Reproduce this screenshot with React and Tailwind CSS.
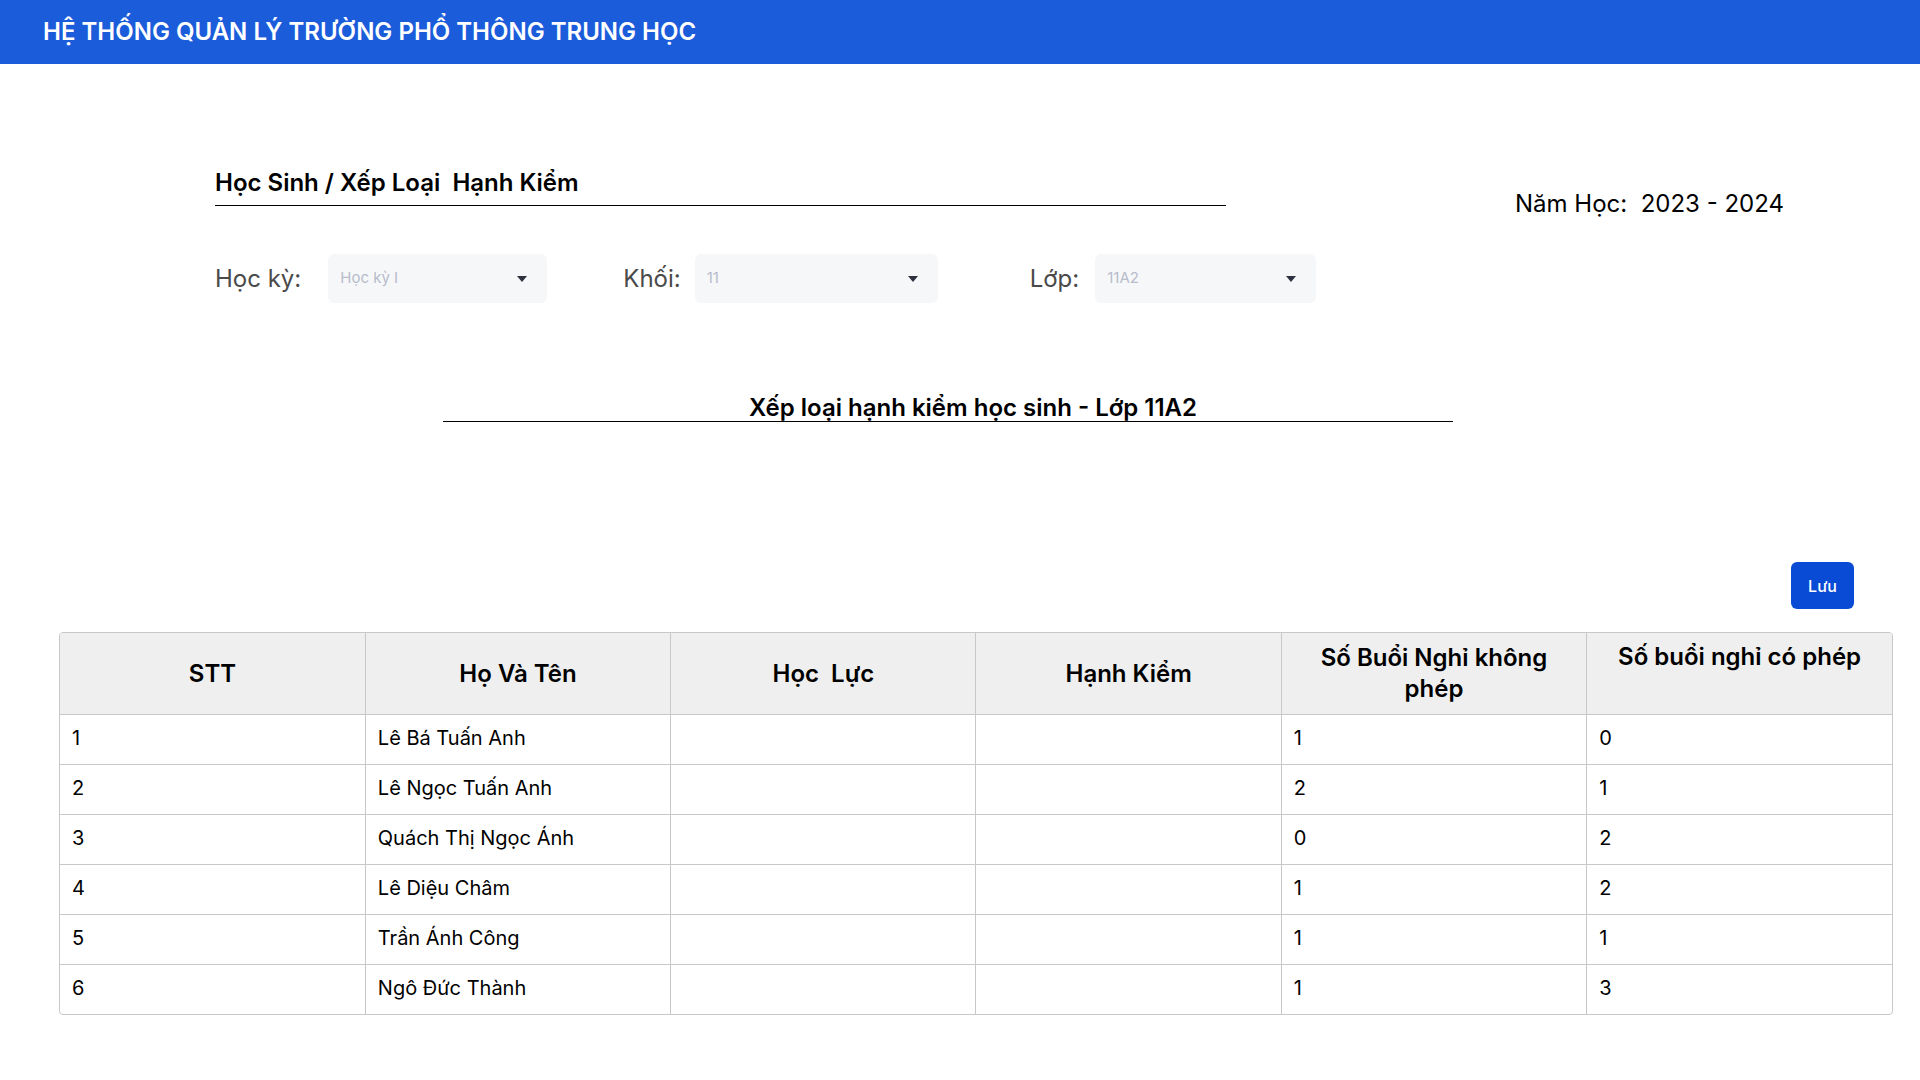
const rows = [
  { stt: 1, name: "Lê Bá Tuấn Anh", khong: 1, co: 0 },
  { stt: 2, name: "Lê Ngọc Tuấn Anh", khong: 2, co: 1 },
  { stt: 3, name: "Quách Thị Ngọc Ánh", khong: 0, co: 2 },
  { stt: 4, name: "Lê Diệu Châm", khong: 1, co: 2 },
  { stt: 5, name: "Trần Ánh Công", khong: 1, co: 1 },
  { stt: 6, name: "Ngô Đức Thành", khong: 1, co: 3 },
];

const headers = ["STT", "Họ Và Tên", "Học\u00a0 Lực", "Hạnh Kiểm", "Số Buổi Nghỉ không phép", "Số buổi nghỉ có phép"];

function Caret() {
  return (
    <svg width="10" height="6" viewBox="0 0 10 6" className="shrink-0">
      <path d="M0 0h10L5 6z" fill="#2d3140" />
    </svg>
  );
}

function Select({ label, value, width, labelGap }) {
  return (
    <div className="flex items-center">
      <span className="text-[24px] leading-[32px] text-[#4a4a4a]" style={{ marginRight: labelGap }}>{label}</span>
      <div
        className="h-[49px] rounded-md bg-[#f6f7f9] flex items-center justify-between pl-3 pr-5"
        style={{ width }}
      >
        <span className="text-[15px] text-[#b8bccb]">{value}</span>
        <Caret />
      </div>
    </div>
  );
}

export default function App() {
  return (
    <div className="min-h-screen bg-white text-black" style={{ fontFamily: "Inter, 'Noto Sans', sans-serif" }}>
      <header className="h-16 bg-[#1b5cdb] flex items-center pl-[43px]">
        <h1 className="text-white text-[24px] font-semibold">HỆ THỐNG QUẢN LÝ TRƯỜNG PHỔ THÔNG TRUNG HỌC</h1>
      </header>

      <div className="flex items-start pl-[215px] pt-[104px]">
        <div className="w-[1011px] border-b border-black pb-[7px]">
          <h2 className="text-[24px] font-semibold leading-[30px]">Học Sinh / Xếp Loại&nbsp; Hạnh Kiểm</h2>
        </div>
        <div className="ml-[289px] pt-[20px] text-[24px] leading-[32px]">Năm Học:&nbsp; 2023 - 2024</div>
      </div>

      <div className="flex items-center pl-[215px] mt-[34px]">
        <Select label="Học kỳ:" value="Học kỳ I" width={219} labelGap={27} />
        <div className="w-[76px]" />
        <Select label="Khối:" value="11" width={243} labelGap={14} />
        <div className="w-[92px]" />
        <Select label="Lớp:" value="11A2" width={221} labelGap={16} />
      </div>

      <div className="ml-[443px] w-[1010px] border-b border-black mt-[92px] text-center pl-[50px]">
        <h3 className="text-[24px] font-semibold leading-[26px]">Xếp loại hạnh kiểm học sinh - Lớp 11A2</h3>
      </div>

      <div className="flex justify-end pr-[66px] mt-[140px]">
        <button className="w-[63px] h-[47px] rounded-md bg-[#0a4bd6] text-white text-[16px] font-medium">Lưu</button>
      </div>

      <div className="mx-[59px] w-[1834px] mt-[23px] border border-[#c8c8c8] rounded-[4px] overflow-hidden">
        <table className="w-full table-fixed border-collapse">
          <thead>
            <tr className="bg-[#efefef] h-[81px]">
              {headers.map((h, i) => (
                <th
                  key={i}
                  className={`text-[24px] font-semibold leading-[31px] px-4 ${i > 0 ? "border-l border-[#c8c8c8]" : ""} ${i === 5 ? "align-top pt-[8px]" : "align-middle"}`}
                >
                  {h}
                </th>
              ))}
            </tr>
          </thead>
          <tbody>
            {rows.map((r) => (
              <tr key={r.stt} className="h-[50px] border-t border-[#c8c8c8] text-[20px]">
                <td className="pl-3 pb-[2px]">{r.stt}</td>
                <td className="pl-3 pb-[2px] border-l border-[#c8c8c8]">{r.name}</td>
                <td className="border-l border-[#c8c8c8]"></td>
                <td className="border-l border-[#c8c8c8]"></td>
                <td className="pl-3 pb-[2px] border-l border-[#c8c8c8]">{r.khong}</td>
                <td className="pl-3 pb-[2px] border-l border-[#c8c8c8]">{r.co}</td>
              </tr>
            ))}
          </tbody>
        </table>
      </div>
    </div>
  );
}
